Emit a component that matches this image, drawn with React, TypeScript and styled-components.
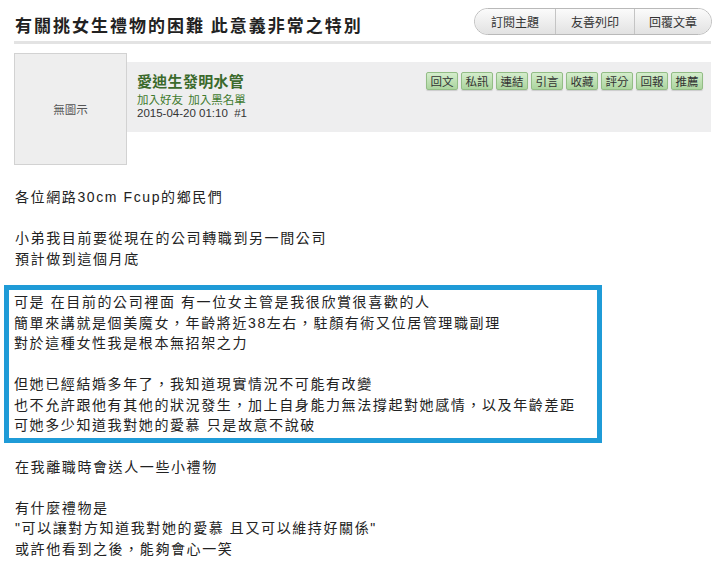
import styled, { createGlobalStyle } from 'styled-components';

const GlobalStyle = createGlobalStyle`
  html, body {
    margin: 0;
    padding: 0;
    background: #ffffff;
  }
  body {
    font-family: "Liberation Sans", "Noto Sans CJK TC", sans-serif;
    color: #222;
  }
`;

const Page = styled.div`
  width: 697px;
  padding: 0 9px 0 14px;
`;

const Header = styled.div`
  display: flex;
  justify-content: space-between;
  align-items: flex-start;
  padding-top: 8px;
  height: 33px;
  border-bottom: 3px solid #e3e3e3;
`;

const Title = styled.h1`
  margin: 0;
  padding: 3px 0 0 1px;
  font-family: "Noto Sans CJK TC", sans-serif;
  font-size: 17px;
  line-height: 27px;
  letter-spacing: 2px;
  font-weight: 700;
  color: #222;
`;

const PillGroup = styled.div`
  display: flex;
  height: 27px;
  border: 1px solid #b9b9b9;
  border-radius: 14px;
  overflow: hidden;
  box-sizing: border-box;
  margin-right: -1px;
`;

const Pill = styled.div<{ $w: number }>`
  width: ${({ $w }) => $w}px;
  display: flex;
  align-items: center;
  justify-content: center;
  font-family: "Noto Sans CJK TC", sans-serif;
  font-size: 12px;
  color: #333;
  background: linear-gradient(#fbfbfb, #e2e2e2);
  & + & {
    border-left: 1px solid #c4c4c4;
  }
`;

const Post = styled.div`
  display: flex;
  margin-top: 9px;
`;

const Avatar = styled.div`
  width: 113px;
  height: 112px;
  box-sizing: border-box;
  border: 1px solid #d2d2d2;
  background: #eeeeee;
  display: flex;
  align-items: center;
  justify-content: center;
  font-family: "Noto Sans CJK TC", sans-serif;
  font-size: 11.5px;
  color: #555;
`;

const Panel = styled.div`
  flex: 1;
  margin-top: 9px;
  height: 70px;
  box-sizing: border-box;
  background: #eeeeef;
  padding: 10px 8px 0 10px;
  display: flex;
  justify-content: space-between;
  align-items: flex-start;
`;

const Info = styled.div`
  display: flex;
  flex-direction: column;
`;

const UserName = styled.div`
  font-family: "Noto Sans CJK TC", sans-serif;
  font-size: 15px;
  font-weight: 700;
  letter-spacing: 0.3px;
  line-height: 18px;
  color: #3b6a2c;
`;

const Links = styled.div`
  margin-top: 2px;
  font-family: "Noto Sans CJK TC", sans-serif;
  font-size: 11.5px;
  line-height: 14px;
  color: #3f7a2e;
`;

const DateLine = styled.div`
  font-size: 11.5px;
  line-height: 14px;
  color: #333;
`;

const Actions = styled.div`
  display: flex;
  gap: 3px;
`;

const ActionButton = styled.div`
  width: 32px;
  height: 18px;
  box-sizing: border-box;
  border: 1px solid #93bd86;
  border-radius: 2px;
  background: linear-gradient(#d4edcc, #abd59e);
  box-shadow: 0 1px 1px rgba(0, 0, 0, 0.15);
  display: flex;
  align-items: center;
  justify-content: center;
  font-family: "Noto Sans CJK TC", sans-serif;
  font-size: 11.5px;
  color: #333;
`;

const Body = styled.div`
  margin-top: 22px;
  padding-left: 1px;
  font-family: "Liberation Sans", "Noto Sans CJK TC", sans-serif;
  font-size: 14px;
  letter-spacing: 1.6px;
  line-height: 20.5px;
  color: #222;
  white-space: pre-line;
`;

const Highlight = styled.div`
  width: 598px;
  box-sizing: border-box;
  margin: 16px 0 14px -11px;
  border: 5px solid #1f9bd7;
  padding: 2px 5px 2px;
`;

const topButtons = [
  { label: '訂閱主題', w: 80 },
  { label: '友善列印', w: 78 },
  { label: '回覆文章', w: 76 },
];

const actions = ['回文', '私訊', '連結', '引言', '收藏', '評分', '回報', '推薦'];

export default function App() {
  return (
    <Page>
      <GlobalStyle />
      <Header>
        <Title>有關挑女生禮物的困難 此意義非常之特別</Title>
        <PillGroup>
          {topButtons.map((b) => (
            <Pill key={b.label} $w={b.w}>
              {b.label}
            </Pill>
          ))}
        </PillGroup>
      </Header>
      <Post>
        <Avatar>無圖示</Avatar>
        <Panel>
          <Info>
            <UserName>愛迪生發明水管</UserName>
            <Links>加入好友&nbsp;&nbsp;加入黑名單</Links>
            <DateLine>2015-04-20 01:10&nbsp;&nbsp;#1</DateLine>
          </Info>
          <Actions>
            {actions.map((a) => (
              <ActionButton key={a}>{a}</ActionButton>
            ))}
          </Actions>
        </Panel>
      </Post>
      <Body>
        {'各位網路30cm Fcup的鄉民們\n\n小弟我目前要從現在的公司轉職到另一間公司\n預計做到這個月底'}
        <Highlight>
          {'可是 在目前的公司裡面 有一位女主管是我很欣賞很喜歡的人\n簡單來講就是個美魔女，年齡將近38左右，駐顏有術又位居管理職副理\n對於這種女性我是根本無招架之力\n\n但她已經結婚多年了，我知道現實情況不可能有改變\n也不允許跟他有其他的狀況發生，加上自身能力無法撐起對她感情，以及年齡差距\n可她多少知道我對她的愛慕 只是故意不說破'}
        </Highlight>
        {'在我離職時會送人一些小禮物\n\n有什麼禮物是\n"可以讓對方知道我對她的愛慕 且又可以維持好關係"\n或許他看到之後，能夠會心一笑'}
      </Body>
    </Page>
  );
}
